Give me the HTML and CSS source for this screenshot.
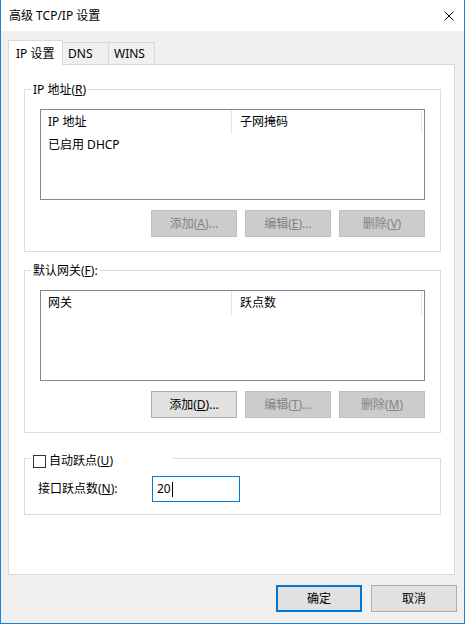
FILE: index.html
```html
<!DOCTYPE html>
<html lang="zh-CN">
<head>
<meta charset="utf-8">
<title>高级 TCP/IP 设置</title>
<link rel="stylesheet" href="styles.css">
</head>
<body>
<div class="window">
  <div class="titlebar">
    <span class="title">高级 TCP/IP 设置</span>
    <svg class="close" width="10" height="10" viewBox="0 0 10 10"><path d="M0.5 0.5 L9.5 9.5 M9.5 0.5 L0.5 9.5" stroke="#000" stroke-width="1" fill="none"/></svg>
  </div>
  <div class="content">
    <div class="tabs">
      <div class="tab active">IP 设置</div>
      <div class="tab">DNS</div>
      <div class="tab">WINS</div>
    </div>
    <div class="panel">
      <div class="group g1">
        <div class="legend">IP 地址(<u>R</u>)</div>
        <div class="list">
          <div class="list-head">
            <div class="col c1">IP 地址</div>
            <div class="col c2">子网掩码</div>
          </div>
          <div class="list-row">已启用 DHCP</div>
        </div>
        <div class="btns">
          <button class="btn" disabled>添加(<u>A</u>)...</button>
          <button class="btn" disabled>编辑(<u>E</u>)...</button>
          <button class="btn" disabled>删除(<u>V</u>)</button>
        </div>
      </div>
      <div class="group g2">
        <div class="legend">默认网关(<u>F</u>):</div>
        <div class="list">
          <div class="list-head">
            <div class="col c1">网关</div>
            <div class="col c2">跃点数</div>
          </div>
        </div>
        <div class="btns">
          <button class="btn">添加(<u>D</u>)...</button>
          <button class="btn" disabled>编辑(<u>T</u>)...</button>
          <button class="btn" disabled>删除(<u>M</u>)</button>
        </div>
      </div>
      <div class="group g3">
        <div class="legend check-legend"><span class="checkbox"></span><span>自动跃点(<u>U</u>)</span></div>
        <div class="metric-row">
          <span class="metric-label">接口跃点数(<u>N</u>):</span>
          <div class="textbox">20<span class="caret"></span></div>
        </div>
      </div>
    </div>
    <div class="footer">
      <button class="btn default">确定</button>
      <button class="btn">取消</button>
    </div>
  </div>
</div>
</body>
</html>
```
FILE: styles.css
```css
* { box-sizing: border-box; }
html, body { margin: 0; padding: 0; }
body {
  width: 465px;
  height: 624px;
  font-family: "Noto Sans", "Noto Sans CJK SC", sans-serif;
  font-size: 12px;
  color: #000;
  background: #f0f0f0;
}
.window {
  width: 465px;
  height: 624px;
  border-left: 1px solid #1883d7;
  border-right: 1px solid #1883d7;
  border-bottom: 1px solid #1883d7;
  background: #f0f0f0;
  display: flex;
  flex-direction: column;
}
.titlebar {
  height: 31px;
  background: #fff;
  display: flex;
  align-items: center;
  justify-content: space-between;
  padding: 0 10px 0 8px;
  line-height: 16px;
}
.close { display: block; }
.content {
  padding: 9px 0 0 7px;
}
.tabs {
  display: flex;
  align-items: flex-end;
  height: 25px;
  margin-bottom: -1px;
  position: relative;
  z-index: 1;
}
.tab {
  height: 23px;
  width: 46px;
  border: 1px solid #d9d9d9;
  border-left: none;
  background: #f0f0f0;
  display: flex;
  align-items: center;
  padding-left: 5px;
  line-height: 16px;
}
.tab.active {
  height: 25px;
  width: 55px;
  border-left: 1px solid #d9d9d9;
  border-bottom: none;
  background: #fff;
  padding-left: 7px;
  padding-top: 1px;
}
.panel {
  width: 447px;
  height: 511px;
  border: 1px solid #d9d9d9;
  background: #fff;
  padding: 24px 0 0 15px;
}
.group {
  position: relative;
  width: 417px;
  border: 1px solid #dcdcdc;
  padding: 19px 0 14px 15px;
}
.g2 { margin-top: 18px; }
.g3 {
  margin-top: 25px;
  padding: 17px 0 12px 13px;
}
.legend {
  position: absolute;
  top: -8px;
  left: 6px;
  padding: 0 2px;
  background: #fff;
  line-height: 16px;
  height: 16px;
}
.check-legend {
  top: -6px;
  width: 142px;
  display: flex;
  align-items: center;
  gap: 3px;
}
.checkbox {
  width: 13px;
  height: 13px;
  border: 1px solid #333;
  background: #fff;
}
.list {
  width: 385px;
  height: 91px;
  border: 1px solid #828790;
  background: #fff;
}
.list-head {
  display: flex;
  height: 24px;
}
.col {
  height: 24px;
  line-height: 24px;
  border-right: 1px solid #e5e5e5;
}
.c1 { width: 191px; padding-left: 7px; }
.c2 { width: 190px; padding-left: 8px; }
.list-row {
  height: 22px;
  line-height: 22px;
  padding-left: 7px;
}
.btns {
  display: flex;
  justify-content: flex-end;
  gap: 8px;
  width: 385px;
  margin-top: 10px;
}
.btn {
  width: 86px;
  height: 27px;
  padding: 0;
  margin: 0;
  font-family: inherit;
  font-size: 12px;
  line-height: 16px;
  color: #000;
  background: #e1e1e1;
  border: 1px solid #adadad;
  border-radius: 0;
}
.btn:disabled {
  background: #cccccc;
  border-color: #bfbfbf;
  color: #838383;
}
.metric-row {
  display: flex;
  align-items: center;
}
.metric-label {
  width: 114px;
  line-height: 16px;
}
.textbox {
  width: 88px;
  height: 26px;
  border: 1px solid #0078d7;
  padding-left: 4px;
  display: flex;
  align-items: center;
  line-height: 16px;
}
.caret {
  display: inline-block;
  width: 1px;
  height: 15px;
  background: #000;
  margin-left: 1px;
}
.footer {
  display: flex;
  justify-content: flex-end;
  gap: 9px;
  padding-right: 7px;
  margin-top: 10px;
}
.btn.default {
  border: 2px solid #0078d7;
}
```
